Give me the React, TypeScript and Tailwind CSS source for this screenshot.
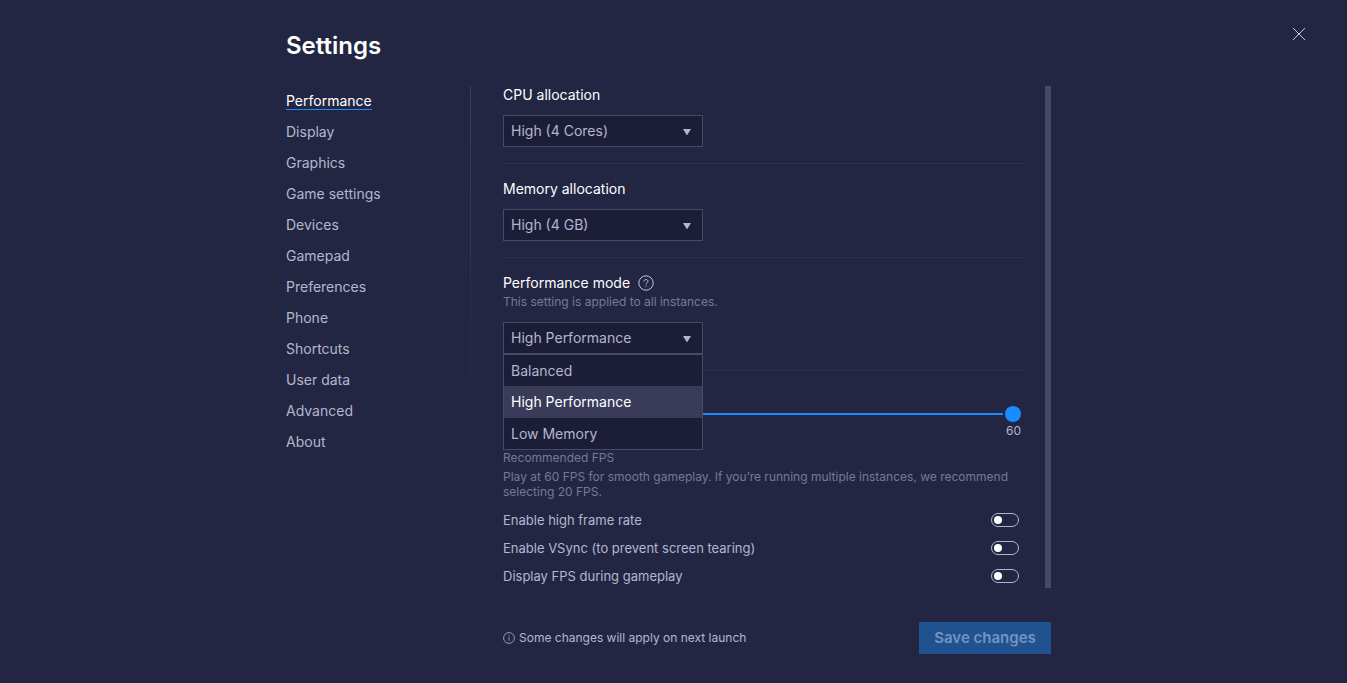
import { useState } from "react";
import type { ReactNode } from "react";

const navItems = [
  "Performance",
  "Display",
  "Graphics",
  "Game settings",
  "Devices",
  "Gamepad",
  "Preferences",
  "Phone",
  "Shortcuts",
  "User data",
  "Advanced",
  "About",
];

const performanceModes = ["Balanced", "High Performance", "Low Memory"];

const toggles = [
  { id: "high-frame-rate", label: "Enable high frame rate" },
  { id: "vsync", label: "Enable VSync (to prevent screen tearing)" },
  { id: "display-fps", label: "Display FPS during gameplay" },
];

type SelectFieldProps = {
  id: string;
  value: string;
  options: string[];
  onChange?: (value: string) => void;
  children?: ReactNode;
};

function SelectField({ id, value, options, onChange, children }: SelectFieldProps) {
  return (
    <div className="relative w-[200px]">
      <select
        id={id}
        value={value}
        onChange={(event) => onChange?.(event.target.value)}
        className="block h-8 w-full appearance-none border border-[#474966] bg-[#1c1e38] px-[7px] text-sm text-[#b4b6cf] outline-none"
      >
        {options.map((option) => (
          <option key={option}>{option}</option>
        ))}
      </select>
      <svg
        className="pointer-events-none absolute top-[14px] right-3 h-[6px] w-2"
        viewBox="0 0 8 6"
        fill="#b4b6cf"
        aria-hidden="true"
      >
        <path d="M0 0h8L4.6 5.6a.7.7 0 0 1-1.2 0z" />
      </svg>
      {children}
    </div>
  );
}

function ToggleRow({ id, label }: { id: string; label: string }) {
  return (
    <div className="flex h-4 items-center justify-between pr-[5px]">
      <label htmlFor={id} className="text-[13px] leading-4">
        {label}
      </label>
      <input
        id={id}
        type="checkbox"
        role="switch"
        className="flex h-[14px] w-7 appearance-none items-center rounded-full border border-[#b4b6cf] px-[2px] before:size-2 before:rounded-full before:bg-white checked:justify-end checked:bg-[#1a8cff]"
      />
    </div>
  );
}

export default function App() {
  const [cores, setCores] = useState("High (4 Cores)");
  const [memory, setMemory] = useState("High (4 GB)");
  const [mode, setMode] = useState("High Performance");
  const [menuOpen, setMenuOpen] = useState(true);
  const [fps, setFps] = useState(60);

  return (
    <div className="relative min-h-screen bg-[#232642] font-['Inter','Liberation_Sans',sans-serif] text-[#b4b6cf]">
      <button type="button" aria-label="Close" className="absolute top-7 right-[42px]">
        <svg width="12" height="12" viewBox="0 0 12 12" stroke="#c4c6dc" fill="none">
          <path d="M0 0l12 12M12 0L0 12" />
        </svg>
      </button>

      <div className="mx-auto flex h-screen min-h-[683px] max-w-[775px] flex-col pr-[10px]">
        <h1 className="mt-[30px] mb-6 text-2xl leading-8 font-semibold text-white">Settings</h1>

        <div className="flex min-h-0 flex-1">
          <nav className="flex w-[184px] shrink-0 flex-col items-start gap-[13px] pt-[6px]">
            {navItems.map((item) => (
              <a
                key={item}
                href="#"
                className={[
                  "h-[18px] text-sm leading-[17px]",
                  item === "Performance" ? "border-b border-[#1a8cff] text-white" : "",
                ].join(" ")}
              >
                {item}
              </a>
            ))}
          </nav>
          <div className="h-[350px] w-px bg-linear-to-b from-[#3d3f5c] to-[#232642]" />

          <main className="ml-8 min-w-0 flex-1 overflow-hidden">
            <section className="border-b border-[#2d304d] pb-4">
              <label htmlFor="cpu" className="mb-[11px] block text-sm leading-[18px] text-white">
                CPU allocation
              </label>
              <SelectField
                id="cpu"
                value={cores}
                options={["High (4 Cores)", "Medium (2 Cores)", "Low (1 Core)"]}
                onChange={setCores}
              />
            </section>

            <section className="border-b border-[#2d304d] pt-4 pb-4">
              <label htmlFor="memory" className="mb-[11px] block text-sm leading-[18px] text-white">
                Memory allocation
              </label>
              <SelectField
                id="memory"
                value={memory}
                options={["High (4 GB)", "Medium (2 GB)", "Low (1 GB)"]}
                onChange={setMemory}
              />
            </section>

            <section className="border-b border-[#2d304d] pt-4 pb-4">
              <div className="flex h-[18px] items-center gap-2">
                <label htmlFor="mode" className="text-sm leading-[18px] text-white">
                  Performance mode
                </label>
                <svg width="16" height="16" viewBox="0 0 16 16" fill="none" stroke="#c4c6dc">
                  <circle cx="8" cy="8" r="7.2" />
                  <path d="M6 6.4c0-1.2.9-1.9 2-1.9s2 .8 2 1.8c0 1.5-2 1.6-2 3.1M8 10.7v1.1" />
                </svg>
              </div>
              <p className="mt-[2px] mb-3 text-xs leading-4 text-[#777994]">
                This setting is applied to all instances.
              </p>
              <SelectField id="mode" value={mode} options={performanceModes} onChange={setMode}>
                {menuOpen ? (
                  <ul className="absolute top-full left-0 z-10 w-full border border-[#474966] bg-[#1c1e38]">
                    {performanceModes.map((option) => (
                      <li key={option} className="h-8 first:h-[31px] last:h-[31px]">
                        <button
                          type="button"
                          onClick={() => {
                            setMode(option);
                            setMenuOpen(false);
                          }}
                          className={[
                            "block h-full w-full px-[7px] text-left text-sm",
                            option === mode ? "bg-[#393b59] text-white" : "",
                          ].join(" ")}
                        >
                          {option}
                        </button>
                      </li>
                    ))}
                  </ul>
                ) : null}
              </SelectField>
            </section>

            <section className="pt-[35px]">
              <div className="pr-[3px]">
                <input
                  type="range"
                  aria-label="Frame rate"
                  min={1}
                  max={60}
                  value={fps}
                  onChange={(event) => setFps(Number(event.target.value))}
                  className="block h-4 w-full appearance-none bg-transparent [&::-webkit-slider-runnable-track]:h-4 [&::-webkit-slider-runnable-track]:bg-[linear-gradient(#1a8cff,#1a8cff)] [&::-webkit-slider-runnable-track]:bg-[length:calc(100%-18px)_2px] [&::-webkit-slider-runnable-track]:bg-[position:left_center] [&::-webkit-slider-runnable-track]:bg-no-repeat [&::-webkit-slider-thumb]:size-4 [&::-webkit-slider-thumb]:appearance-none [&::-webkit-slider-thumb]:rounded-full [&::-webkit-slider-thumb]:bg-[#1a8cff]"
                />
                <p className="mt-px text-right text-xs leading-4">{fps}</p>
              </div>
              <p className="mt-[11px] text-xs leading-4 text-[#777994]">Recommended FPS</p>
              <p className="mt-[3px] text-xs leading-[15px] text-[#777994]">
                Play at 60 FPS for smooth gameplay. If you’re running multiple instances, we
                recommend selecting 20 FPS.
              </p>
              <div className="mt-[13px] flex flex-col gap-3">
                {toggles.map((toggle) => (
                  <ToggleRow key={toggle.id} id={toggle.id} label={toggle.label} />
                ))}
              </div>
            </section>
          </main>

          <div className="ml-[21px] w-[6px] shrink-0 bg-[#474966]" />
        </div>

        <footer className="mt-[34px] mb-[29px] ml-[217px] flex items-center justify-between">
          <p className="flex items-center gap-1 text-xs leading-4">
            <svg width="12" height="12" viewBox="0 0 12 12" fill="none" stroke="#b4b6cf" strokeWidth="0.8">
              <circle cx="6" cy="6" r="5.4" />
              <path d="M6 5.2v3.6M6 3.2v1" />
            </svg>
            Some changes will apply on next launch
          </p>
          <button
            type="button"
            disabled
            className="h-8 w-[132px] bg-[#1f528f] text-[15px] font-semibold text-[#7493c0]"
          >
            Save changes
          </button>
        </footer>
      </div>
    </div>
  );
}
